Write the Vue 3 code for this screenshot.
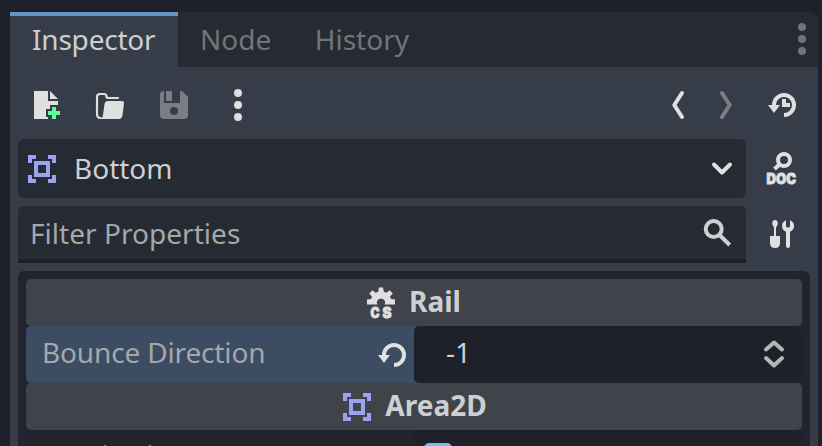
<script setup>
const tabs = [
  { name: 'Inspector', active: true },
  { name: 'Node', active: false },
  { name: 'History', active: false },
]
</script>

<template>
  <div class="window">
    <div class="dock">
      <div class="tabs">
        <div v-for="t in tabs" :key="t.name" class="tab" :class="{ active: t.active }">{{ t.name }}</div>
        <svg class="icon tabs-menu" viewBox="0 0 32 32">
          <circle cx="16" cy="4" r="4" /><circle cx="16" cy="16" r="4" /><circle cx="16" cy="28" r="4" />
        </svg>
      </div>

      <div class="toolbar">
        <svg class="icon" viewBox="0 0 16 16">
          <path d="M2 1v14h7v-1H8v-4h2V8h4V6H9V1zm8 0v4h4z" />
          <path class="plus" d="M11 9h2v2h2v2h-2v2h-2v-2H9v-2h2z" />
        </svg>
        <svg class="icon" viewBox="0 0 32 32">
          <path class="line thin" d="M6.500 29C4 29 3 27.500 3 25V8Q3 5 6 5H10Q12.500 5 12.500 7.500Q12.500 9 14.500 9H24" />
          <path d="M14 12H28Q30.300 12 30 14.500L28.500 26Q28 30 24.500 30H5.500Q8.500 29.500 9 26L10.500 15Q11 12 14 12Z" />
        </svg>
        <svg class="icon disabled" viewBox="0 0 16 16">
          <path fill-rule="evenodd" d="M3 1a2 2 0 0 0-2 2v10a2 2 0 0 0 2 2h10a2 2 0 0 0 2-2V4l-3-3h-1v6H3zM4 1h3v5H4zM8 9a2 2 0 0 0 0 4 2 2 0 0 0 0-4z" />
        </svg>
        <svg class="icon" viewBox="0 0 32 32">
          <circle cx="16" cy="4" r="4" /><circle cx="16" cy="16" r="4" /><circle cx="16" cy="28" r="4" />
        </svg>
        <svg class="icon back" viewBox="0 0 32 32"><path class="line" d="M20 4L12.300 16L20 28" /></svg>
        <svg class="icon forward disabled" viewBox="0 0 32 32"><path class="line" d="M12 4L19.700 16L12 28" /></svg>
        <svg class="icon history" viewBox="0 0 32 32">
          <path class="line butt" d="M18 26A10 10 0 1 0 8 16" />
          <path d="M2 16H14L8 24ZM16 10h4v4h4v4h-8z" />
        </svg>
      </div>

      <div class="line-row">
        <div class="object">
          <svg class="icon area" viewBox="0 0 32 32">
            <path d="M2 2h8v4H6v4H2zM22 2h8v8h-4V6h-4zM2 22h4v4h4v4H2zM26 22h4v8h-8v-4h4z" />
            <path fill-rule="evenodd" d="M8 8h16v16H8zM12 12v8h8v-8z" />
          </svg>
          <span class="object-name">Bottom</span>
          <svg class="icon" viewBox="0 0 32 32"><path class="line" d="M8 11.500L16 19.500L24 11.500" /></svg>
        </div>
        <svg class="icon doc" viewBox="0 0 32 36">
          <circle class="line" cx="18" cy="10" r="6" />
          <path class="line butt" d="M14 14L8.500 19" />
          <text x="0.500" y="33.500" textLength="29.500" lengthAdjust="spacingAndGlyphs">DOC</text>
        </svg>
      </div>

      <div class="line-row filter-row">
        <div class="filter">
          <span>Filter Properties</span>
          <svg class="icon" viewBox="0 0 32 32">
            <circle class="line" cx="12.700" cy="12" r="8" />
            <path class="line butt" d="M18 17.500L28.700 28" />
          </svg>
        </div>
        <svg class="icon tools" viewBox="0 0 32 32">
          <path d="M9 2C11 2 12 4 11.700 6L10.500 9H10V18H14V25Q14 30 9 30Q4 30 4 25V18H8V9H7.500L6.300 6C6 4 7 2 9 2Z" />
          <path d="M20 2.300V8Q20 9.500 22 9.500Q24 9.500 24 8V2.300Q28 4 28 8Q28 12 24 13.700V28Q24 30 22 30Q20 30 20 28V13.700Q16 12 16 8Q16 4 20 2.300Z" />
        </svg>
      </div>

      <div class="properties">
        <div class="category rail">
          <svg class="icon script" viewBox="0 0 32 32">
            <path d="M2 17.500V12.500L6 12L7 9.500L4.200 6.500L7.500 3.200L10.500 5.700L13.200 4.800L14 0.500H18L18.800 4.800L21.500 5.700L24.500 3.200L27.800 6.500L25 9.500L26 12L30 12.500V17.500H19.500Q20.500 16 20 14.200Q19 11.500 16 11.500Q13 11.500 12 14.200Q11.500 16 12.500 17.500Z" />
            <text x="5.500" y="30.500" textLength="9" lengthAdjust="spacingAndGlyphs">C</text>
            <text x="17.500" y="30.500" textLength="9" lengthAdjust="spacingAndGlyphs">S</text>
          </svg>
          <span>Rail</span>
        </div>
        <div class="property selected">
          <div class="label">
            <span>Bounce Direction</span>
            <svg class="icon" viewBox="0 0 32 32">
              <path class="line butt" d="M18 26A10 10 0 1 0 8 16" /><path d="M2 16H14L8 24Z" />
            </svg>
          </div>
          <div class="value">
            <span>-1</span>
            <svg class="icon spin" viewBox="0 0 32 32">
              <path class="line" d="M8 11.500L16 4.500L24 11.500M8 20L16 27.500L24 20" />
            </svg>
          </div>
        </div>
        <div class="category">
          <svg class="icon area" viewBox="0 0 32 32">
            <path d="M2 2h8v4H6v4H2zM22 2h8v8h-4V6h-4zM2 22h4v4h4v4H2zM26 22h4v8h-8v-4h4z" />
            <path fill-rule="evenodd" d="M8 8h16v16H8zM12 12v8h8v-8z" />
          </svg>
          <span>Area2D</span>
        </div>
        <div class="property next">
          <div class="label"><span>Monitoring</span></div>
          <div class="value"><div class="check"></div></div>
        </div>
      </div>
    </div>
  </div>
</template>

<style>
body { background: #1e2129; overflow: hidden; }
</style>

<style scoped>
.window {
  box-sizing: border-box;
  width: 822px;
  height: 446px;
  padding: 12px 4px 0 10px;
  overflow: hidden;
  background: #1e2129;
  color: #cdcfd2;
  font: 28px/38px "Noto Sans", sans-serif;
}
.dock { width: 808px; height: 500px; background: #363c48; border-radius: 0 10px 0 0; overflow: hidden; }
.tabs { display: flex; height: 55px; background: #262a33; }
.tab { box-sizing: border-box; padding: 8px 22px 0; color: #727578; }
.tab.active { width: 168px; padding-top: 4px; border-top: 4px solid #6495c8; background: #363c48; color: #cdcfd2; letter-spacing: -0.2px; }
.tab:nth-child(3) { margin-left: -0.5px; }
.icon { display: block; flex: none; width: 32px; height: 32px; fill: #e0e0e0; stroke: none; overflow: visible; }
.line { fill: none; stroke: #e0e0e0; stroke-width: 4; stroke-linecap: round; stroke-linejoin: round; }
.thin { stroke-width: 2.2; }
.butt { stroke-linecap: butt; }
.plus { fill: #5fff97; }
.disabled { opacity: 0.4; }
.tabs-menu { margin: 11px 0 0 auto; fill: #727578; }
.toolbar { display: flex; gap: 32px; padding: 22px 20px 18px; }
.back { margin-left: auto; }
.forward { margin-left: -16px; }
.history { margin-left: -8px; }
.line-row { display: flex; gap: 20px; padding-left: 8px; }
.object {
  box-sizing: border-box;
  display: flex;
  align-items: center;
  width: 728px;
  height: 59px;
  padding: 0 8px;
  border-radius: 6px;
  background: #262a33;
}
.object-name { flex: 1; margin-top: -2px; padding-left: 16px; }
.doc { width: 32px; height: 36px; margin-top: 11px; }
.area { fill: #9ba2f2; }
.doc text { font: 900 15px Inter, sans-serif; stroke: #e0e0e0; stroke-width: 0.8; }
.filter-row { margin-top: 8px; }
.filter {
  box-sizing: border-box;
  display: flex;
  align-items: center;
  justify-content: space-between;
  width: 728px;
  height: 57px;
  padding: 0 13px 0 12px;
  border-bottom: 4px solid #1e2129;
  border-radius: 6px 6px 0 0;
  background: #262a33;
  color: #a5a7a9;
  letter-spacing: 0.04px;
}
.filter .icon { margin-top: 1px; }
.filter .line { stroke: #cdcfd2; }
.tools { margin-top: 12px; }
.properties {
  box-sizing: border-box;
  width: 792px;
  height: 230px;
  margin: 8px 0 0 8px;
  padding: 8px;
  border-radius: 6px;
  background: #21242c;
}
.category {
  box-sizing: border-box;
  display: flex;
  align-items: center;
  justify-content: center;
  gap: 12px;
  height: 47px;
  border-radius: 5px;
  background: #404349;
  font-weight: 700;
}
.category span { margin-top: -4px; }
.rail { padding-right: 2px; }
.rail .icon { margin-top: 1px; }
.script text { font: 900 14px Inter, sans-serif; stroke: #e0e0e0; stroke-width: 0.8; }
.property { display: flex; height: 57px; color: #a5a7a9; }
.label, .value { box-sizing: border-box; display: flex; align-items: center; justify-content: space-between; width: 388px; }
.label { padding: 0 6px 0 16px; border-radius: 5px 0 0 5px; letter-spacing: -0.15px; }
.label span, .value span { margin-top: -5px; }
.next .label span { margin-top: -7px; }
.selected { background: #3b4c63; border-radius: 5px; }
.value { padding: 0 12px 0 32px; border-radius: 5px; background: #1e2129; color: #cdcfd2; }
.spin { margin-top: -1px; }
.spin .line { stroke: #b5b6b8; }
.check { width: 28px; height: 32px; margin-left: -22px; border-radius: 5px; background: #7eb6f5; }
</style>
